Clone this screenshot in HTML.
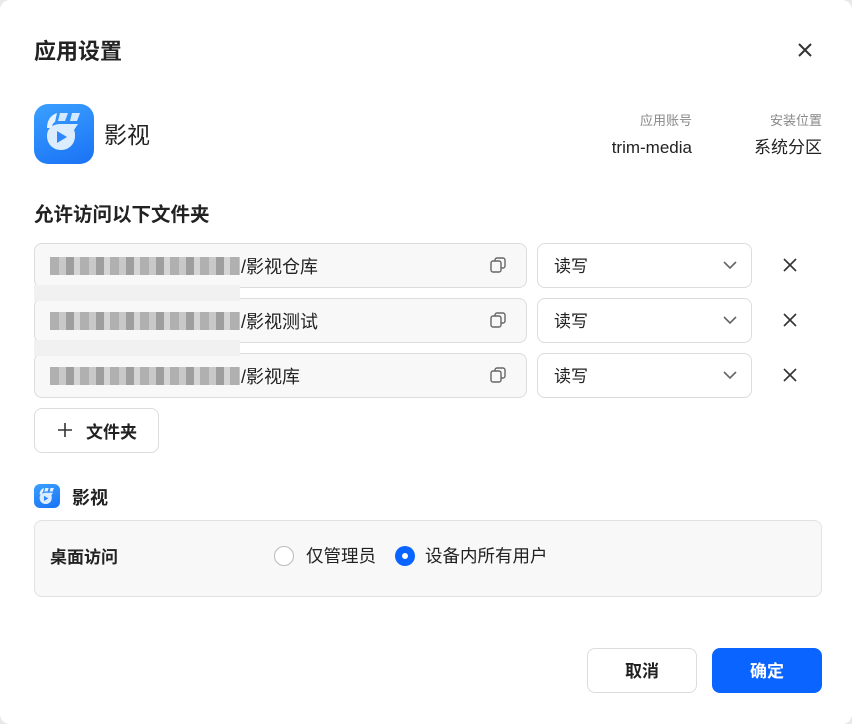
<!DOCTYPE html>
<html><head><meta charset="utf-8"><style>
*{box-sizing:border-box;margin:0;padding:0}
body{width:852px;height:724px;background:#e9e9e9;font-family:"Liberation Sans","Noto Sans CJK SC",sans-serif;color:#222;position:relative;overflow:hidden;line-height:1}
.dlg{position:absolute;left:0;top:0;width:852px;height:724px;background:#fff;border-radius:10px}
.a{position:absolute;white-space:nowrap}
.inp{position:absolute;left:34px;width:493px;height:45px;background:#f8f8f8;border:1px solid #dcdcdc;border-radius:8px}
.sel{position:absolute;left:537px;width:215px;height:45px;background:#fff;border:1px solid #dcdcdc;border-radius:8px}
.st{position:absolute;left:554px;font-size:17px}
.blur{position:absolute;left:50px;width:190px;height:18px;background:repeating-linear-gradient(90deg,#b0b0b0 0 9px,#c8c8c8 9px 16px,#9e9e9e 16px 24px,#d4d4d4 24px 30px)}
.path{position:absolute;left:241px;font-size:18px}
.cp{position:absolute;left:489px}
.x{position:absolute;left:783px}
</style></head><body><div class="dlg">
<div class="a" style="left:34px;top:41px;font-size:22px;font-weight:bold">应用设置</div>
<svg class="a" style="left:797px;top:42px" width="16" height="16" viewBox="0 0 16 16"><path d="M2 2L14 14M14 2L2 14" stroke="#333" stroke-width="2"/></svg>
<div class="a" style="left:34px;top:104px;width:60px;height:60px;border-radius:14px;background:linear-gradient(160deg,#3aa0ff,#1a72f5)">
<svg width="60" height="60" viewBox="0 0 60 60"><path d="M13 24c0-8 4-13 10-15l-2 9c-2 1-3 3-3 6z" fill="#e6f2ff"/><path d="M26 9h8l-3 8h-7zM38 9h8l-3 8h-7z" fill="#e6f2ff" opacity=".9"/><path d="M27 20h17l-4 6c1 2 1 4 1 6 0 8-6 14-14 14s-14-6-14-14 6-12 14-12z" fill="#dcecff"/><path d="M23 27l10 6-10 6z" fill="#2f86ff"/></svg></div>
<div class="a" style="left:104px;top:124px;font-size:23px">影视</div>
<div class="a" style="left:592px;top:114px;width:100px;text-align:right;font-size:13px;color:#888">应用账号</div>
<div class="a" style="left:572px;top:139px;width:120px;text-align:right;font-size:17px">trim-media</div>
<div class="a" style="left:722px;top:114px;width:100px;text-align:right;font-size:13px;color:#888">安装位置</div>
<div class="a" style="left:722px;top:139px;width:100px;text-align:right;font-size:17px">系统分区</div>
<div class="a" style="left:34px;top:206px;font-size:19.5px;font-weight:bold">允许访问以下文件夹</div>

<div class="inp" style="top:243px"></div><div class="inp" style="top:298px"></div><div class="inp" style="top:353px"></div>
<div class="a" style="left:34px;top:285px;width:206px;height:16px;background:#f1f1f1"></div>
<div class="a" style="left:34px;top:340px;width:206px;height:16px;background:#f1f1f1"></div>
<div class="blur" style="top:257px"></div><div class="blur" style="top:312px"></div><div class="blur" style="top:367px"></div>
<div class="path" style="top:258px">/影视仓库</div><div class="path" style="top:313px">/影视测试</div><div class="path" style="top:368px">/影视库</div>
<svg class="cp" style="top:256px" width="18" height="18" viewBox="0 0 18 18"><rect x="2" y="5" width="10" height="11" rx="2" fill="none" stroke="#666" stroke-width="1.4"/><path d="M6 5V4a2 2 0 012-2h6a2 2 0 012 2v6a2 2 0 01-2 2h-2" fill="none" stroke="#666" stroke-width="1.4"/></svg>
<svg class="cp" style="top:311px" width="18" height="18" viewBox="0 0 18 18"><rect x="2" y="5" width="10" height="11" rx="2" fill="none" stroke="#666" stroke-width="1.4"/><path d="M6 5V4a2 2 0 012-2h6a2 2 0 012 2v6a2 2 0 01-2 2h-2" fill="none" stroke="#666" stroke-width="1.4"/></svg>
<svg class="cp" style="top:366px" width="18" height="18" viewBox="0 0 18 18"><rect x="2" y="5" width="10" height="11" rx="2" fill="none" stroke="#666" stroke-width="1.4"/><path d="M6 5V4a2 2 0 012-2h6a2 2 0 012 2v6a2 2 0 01-2 2h-2" fill="none" stroke="#666" stroke-width="1.4"/></svg>
<div class="sel" style="top:243px"></div><div class="sel" style="top:298px"></div><div class="sel" style="top:353px"></div>
<div class="st" style="top:258px">读写</div><div class="st" style="top:313px">读写</div><div class="st" style="top:368px">读写</div>
<svg class="a" style="left:722px;top:259px" width="16" height="12"><path d="M2 3l6 6 6-6" fill="none" stroke="#666" stroke-width="1.6"/></svg>
<svg class="a" style="left:722px;top:314px" width="16" height="12"><path d="M2 3l6 6 6-6" fill="none" stroke="#666" stroke-width="1.6"/></svg>
<svg class="a" style="left:722px;top:369px" width="16" height="12"><path d="M2 3l6 6 6-6" fill="none" stroke="#666" stroke-width="1.6"/></svg>
<svg class="x" style="top:258px" width="14" height="14"><path d="M1 1l12 12M13 1L1 13" stroke="#333" stroke-width="1.6"/></svg>
<svg class="x" style="top:313px" width="14" height="14"><path d="M1 1l12 12M13 1L1 13" stroke="#333" stroke-width="1.6"/></svg>
<svg class="x" style="top:368px" width="14" height="14"><path d="M1 1l12 12M13 1L1 13" stroke="#333" stroke-width="1.6"/></svg>
<div class="a" style="left:34px;top:408px;width:125px;height:45px;border:1px solid #dcdcdc;border-radius:8px"></div>
<div class="a" style="left:86px;top:424px;font-size:17px;font-weight:bold">文件夹</div>
<svg class="a" style="left:58px;top:423px" width="14" height="14"><path d="M7 0v14M0 7h14" stroke="#333" stroke-width="1.6"/></svg>
<div class="a" style="left:34px;top:484px;width:26px;height:24px;border-radius:6px;background:linear-gradient(160deg,#3aa0ff,#1a72f5)"><svg width="26" height="24" viewBox="0 0 60 55"><path d="M13 24c0-8 4-13 10-15l-2 9c-2 1-3 3-3 6z" fill="#e6f2ff"/><path d="M26 9h8l-3 8h-7zM38 9h8l-3 8h-7z" fill="#e6f2ff"/><path d="M27 20h17l-4 6c1 2 1 4 1 6 0 8-6 14-14 14s-14-6-14-14 6-12 14-12z" fill="#dcecff"/><path d="M23 27l10 6-10 6z" fill="#2f86ff"/></svg></div>
<div class="a" style="left:72px;top:489px;font-size:18px;font-weight:bold">影视</div>
<div class="a" style="left:34px;top:520px;width:788px;height:77px;background:#f8f8f8;border:1px solid #e2e2e2;border-radius:8px"></div>
<div class="a" style="left:50px;top:549px;font-size:17px;font-weight:bold">桌面访问</div>
<div class="a" style="left:274px;top:546px;width:20px;height:20px;border-radius:50%;border:1px solid #bbb;background:#fff"></div>
<div class="a" style="left:306px;top:548px;font-size:17.5px">仅管理员</div>
<div class="a" style="left:395px;top:546px;width:20px;height:20px;border-radius:50%;background:#0a64ff"><div style="margin:7px;width:6px;height:6px;border-radius:50%;background:#fff"></div></div>
<div class="a" style="left:425px;top:548px;font-size:17.5px">设备内所有用户</div>
<div class="a" style="left:587px;top:648px;width:110px;height:45px;border:1px solid #dcdcdc;border-radius:8px"></div>
<div class="a" style="left:587px;top:663px;width:110px;text-align:center;font-size:17px;font-weight:bold">取消</div>
<div class="a" style="left:712px;top:648px;width:110px;height:45px;background:#0a64ff;border-radius:8px"></div>
<div class="a" style="left:712px;top:663px;width:110px;text-align:center;font-size:17px;font-weight:bold;color:#fff">确定</div>
</div></body></html>
